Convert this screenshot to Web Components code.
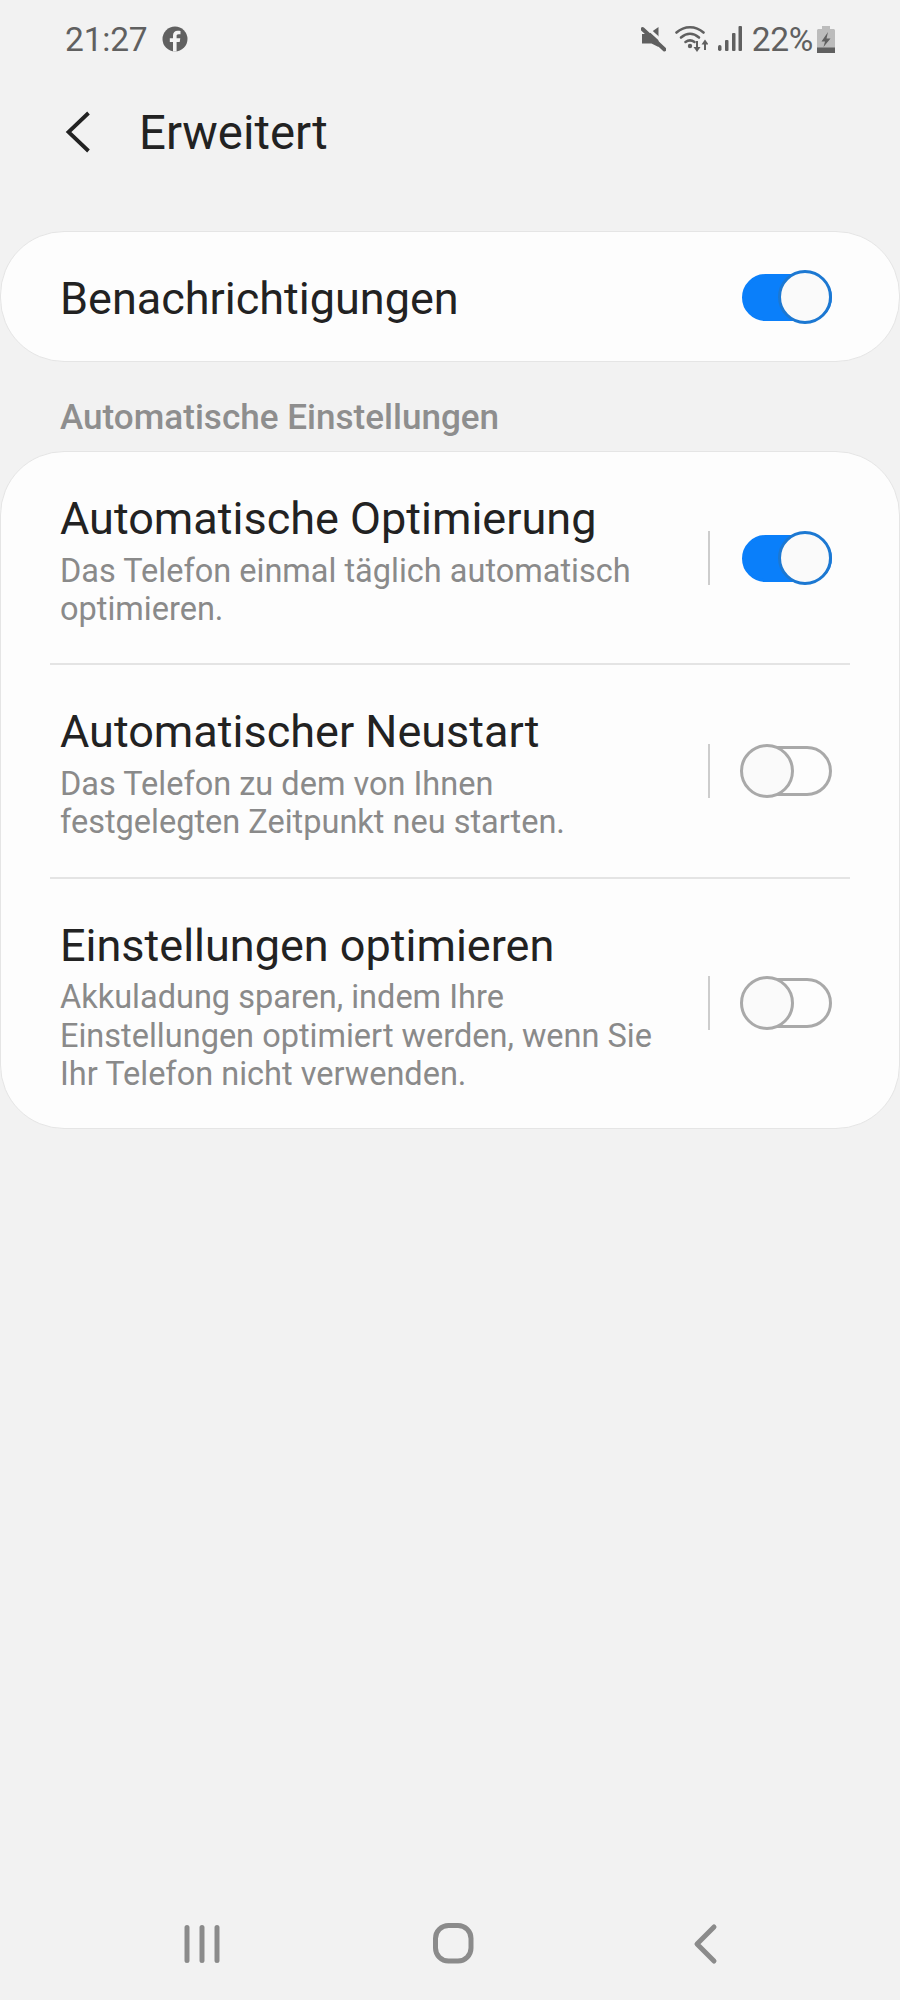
<!DOCTYPE html>
<html lang="de"><head><meta charset="utf-8"><title>Erweitert</title>
<style>
html,body{margin:0;padding:0;background:#f2f2f2;font-family:Roboto,"Liberation Sans",sans-serif}
body{width:900px;height:2000px;display:flex;flex-direction:column;overflow:hidden}
</style></head><body>
<status-bar></status-bar>
<app-header>Erweitert</app-header>
<settings-card style="margin-top:45px">
  <setting-row checked plain>Benachrichtigungen</setting-row>
</settings-card>
<section-label>Automatische Einstellungen</section-label>
<settings-card>
  <setting-row checked separator divided>Automatische Optimierung<span slot="sub">Das Telefon einmal täglich automatisch optimieren.</span></setting-row>
  <setting-row separator divided>Automatischer Neustart<span slot="sub">Das Telefon zu dem von Ihnen festgelegten Zeitpunkt neu starten.</span></setting-row>
  <setting-row separator>Einstellungen optimieren<span slot="sub">Akkuladung sparen, indem Ihre Einstellungen optimiert werden, wenn Sie Ihr Telefon nicht verwenden.</span></setting-row>
</settings-card>
<nav-bar></nav-bar>
<script>
function def(name,html){
  customElements.define(name,class extends HTMLElement{
    constructor(){super();this.attachShadow({mode:'open'}).innerHTML=html;}
  });
}
def('status-bar',`<style>
:host{display:flex;align-items:center;height:78px;padding:0 65px 0 65px;box-sizing:border-box;color:#606060;font-size:33.500px;letter-spacing:-.2px;flex:none}
svg{display:block;flex:none}
.sp{flex:1}
</style>
<span>21:27</span>
<svg style="margin-left:15px" width="26" height="26" viewBox="0 0 26 26"><circle cx="13" cy="13" r="12.500" fill="#606060"/><path d="M14.600 25.400V16h3.100l.6-3.700h-3.700V10c0-1.100.4-1.800 1.900-1.800h2V5c-.4-.1-1.500-.2-2.800-.2-2.800 0-4.700 1.700-4.700 4.800v2.700H7.800V16H11v9.400z" fill="#f2f2f2"/></svg>
<span class="sp"></span>
<svg width="25" height="26" viewBox="0 0 25 26"><path d="M1 8h6.500L17.500 1v20l-7-3.500H1z" fill="#606060"/><path d="M4 0 26 20" stroke="#f2f2f2" stroke-width="3"/><path d="M1.500 3 23.500 23.500" stroke="#606060" stroke-width="4" stroke-linecap="round"/></svg>
<svg style="margin-left:9px" width="33" height="28" viewBox="0 0 33 28"><g fill="none" stroke="#606060" stroke-width="2.600" stroke-linecap="round"><path d="M1.500 7.500C9.500 .5 20.500 .5 28.500 7.500"/><path d="M6 12.500C12 7.500 18 7.500 24 12.500"/><path d="M10.500 17c3-2.200 6-2.200 9 0"/></g><circle cx="15" cy="21" r="2.200" fill="#606060"/><path d="M22 16v8" stroke="#606060" stroke-width="2"/><path d="M18.500 22h7L22 27z" fill="#606060"/><path d="M30 25v-8" stroke="#606060" stroke-width="2"/><path d="M26.500 19.500h7L30 14.500z" fill="#606060"/></svg>
<svg style="margin-left:10px" width="24" height="26" viewBox="0 0 24 26" fill="#606060"><rect x="0" y="19" width="3.500" height="6" rx="1.700"/><rect x="7" y="14" width="3.500" height="11" rx="1"/><rect x="14" y="7" width="3.500" height="18" rx="1"/><rect x="20.500" y="0" width="3.500" height="25" rx="1"/></svg>
<span style="margin-left:10px;letter-spacing:-.3px">22%</span>
<svg style="margin-left:4px" width="18" height="27" viewBox="0 0 18 27"><path d="M5 0h8v3h3.500c.8 0 1.500.7 1.500 1.500V27H0V4.500C0 3.700.7 3 1.500 3H5z" fill="#bcbcbc"/><rect y="21.500" width="18" height="5.500" fill="#606060"/><path d="M11 6 4.500 15.500H8L6.500 21l7-8.500H9.500z" fill="#606060"/></svg>`);
def('app-header',`<style>
:host{display:flex;align-items:center;height:108px;padding-left:65px;box-sizing:border-box;color:#222;font-size:47.300px;flex:none}
svg{display:block;flex:none;margin-right:46px}
span{padding-top:2px}
</style>
<svg width="28" height="42" viewBox="0 0 28 42"><path d="M23.500 2 3.500 21l20 19" fill="none" stroke="#222" stroke-width="3.800"/></svg><span><slot></slot></span>`);
def('settings-card',`<style>
:host{display:block;background:#fdfdfd;border:1px solid #e5e5e5;border-radius:64px;flex:none}
</style><slot></slot>`);
def('section-label',`<style>
:host{display:block;padding:36px 60px 0;height:89px;box-sizing:border-box;color:#8e8e8e;font-size:35.100px;font-weight:500;line-height:38px;flex:none}
</style><slot></slot>`);
def('toggle-switch',`<style>
:host{display:block;position:relative;width:92px;height:54px;flex:none}
.t{position:absolute;left:2px;right:0;top:2px;bottom:2px;border-radius:25px;box-sizing:border-box;border:3px solid #a9a9a9;background:#fdfdfd}
.k{position:absolute;left:0;top:0;width:54px;height:54px;border-radius:50%;box-sizing:border-box;border:3px solid #a9a9a9;background:#fafafa}
:host([checked]) .t{top:4px;bottom:3px;background:#0a7ffa;border-color:#0a7ffa}
:host([checked]) .k{left:38px;border-color:#1c78d2}
</style><div class="t"></div><div class="k"></div>`);
customElements.define('setting-row',class extends HTMLElement{
  constructor(){super();
    const r=this.attachShadow({mode:'open'});
    const on=this.hasAttribute('checked');
    r.innerHTML=`<style>
:host{display:block;margin:0 49px}
:host([divided]){border-bottom:2px solid #e4e4e4}
.row{display:flex;align-items:center;padding:39px 18px 39px 10px}
.text{flex:1;min-width:0;margin:4px 0 -4px}
:host([plain]) .row{padding-top:37.500px;padding-bottom:37.500px}
:host([plain]) .text{margin:0}
:host([plain]) .title{margin:4px 0 0}
.title{font-size:45px;line-height:48px;color:#222;margin-bottom:8.500px}
.sub{font-size:32.500px;line-height:38.400px;color:#8a8a8a;display:block;margin-right:40px}
:host([plain]) .sub{display:none}
.sep{width:2px;height:54px;background:#cdcdcd;margin-right:30px;flex:none}
:host(:not([separator])) .sep{display:none}
</style><div class="row"><div class="text"><div class="title"><slot></slot></div><div class="sub"><slot name="sub"></slot></div></div><div class="sep"></div><toggle-switch ${on?'checked':''}></toggle-switch></div>`;
  }
});
def('nav-bar',`<style>
:host{display:block;position:relative;height:100px;margin-top:auto;flex:none}
svg{position:absolute;left:0;top:0}
</style>
<svg width="900" height="100" viewBox="0 1900 900 100" fill="none" stroke="#8b8b8b" stroke-linecap="round">
<path d="M187 1927.500v33M202 1927.500v33M217 1927.500v33" stroke-width="5"/>
<rect x="435.500" y="1925.500" width="35.500" height="35.500" rx="13" stroke-width="5"/>
<path d="M714 1927 697 1944l17 17" stroke-width="5" stroke-linejoin="round"/>
</svg>`);
</script>
</body></html>
